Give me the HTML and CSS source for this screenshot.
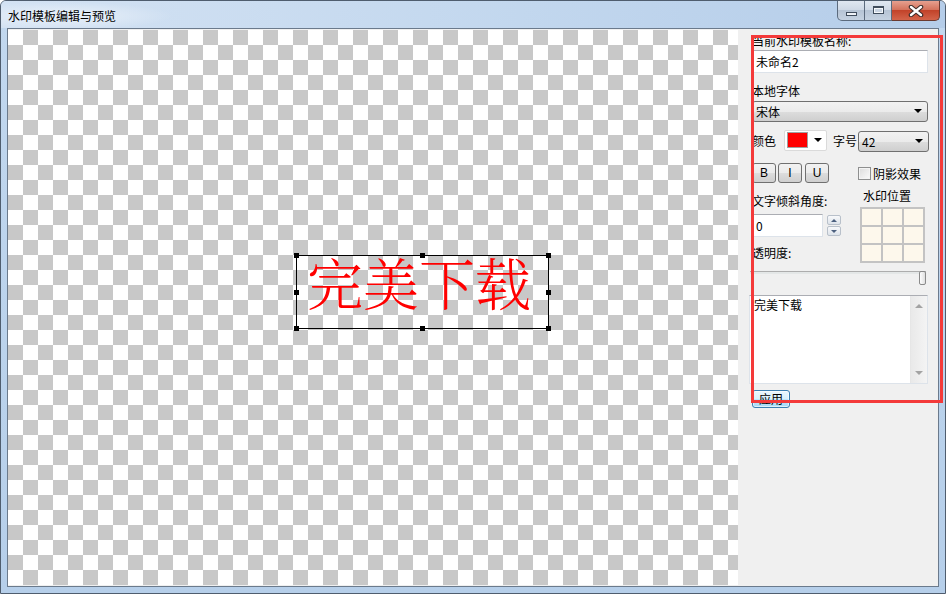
FILE: index.html
```html
<!DOCTYPE html>
<html>
  <head>
    <meta charset="utf-8">
    <link rel="stylesheet" href="styles.css">
  </head>
  <body>
    <div class="window">
      <div class="titlebar">
        <span class="title">水印模板编辑与预览</span>
        <div class="caption-buttons">
          <span class="cap cap-min"><i></i></span>
          <span class="cap cap-max"><i></i></span>
          <span class="cap cap-close">
            <svg width="16" height="12" viewBox="0 0 16 12">
              <path d="M3 2 L13 10 M13 2 L3 10" stroke="#3a2a28" stroke-width="4.5" stroke-linecap="round"/>
              <path d="M3 2 L13 10 M13 2 L3 10" stroke="#fff" stroke-width="2.4" stroke-linecap="round"/>
            </svg>
          </span>
        </div>
      </div>

      <div class="client">
        <div class="canvas">
          <div class="mark">
            <span class="mark-text">完美下载</span>
            <i class="handle h-tl"></i>
            <i class="handle h-tm"></i>
            <i class="handle h-tr"></i>
            <i class="handle h-ml"></i>
            <i class="handle h-mr"></i>
            <i class="handle h-bl"></i>
            <i class="handle h-bm"></i>
            <i class="handle h-br"></i>
          </div>
        </div>

        <div class="panel">
          <div class="label">当前水印模板名称:</div>
          <div class="textbox name">未命名2</div>

          <div class="label label-font">本地字体</div>
          <div class="select font-select">宋体<i class="arrow"></i></div>

          <div class="row color-row">
            <span>颜色</span>
            <span class="color-btn"><i class="swatch"></i><i class="arrow"></i></span>
            <span class="size-label">字号</span>
            <span class="select size-select">42<i class="arrow"></i></span>
          </div>

          <div class="row style-row">
            <span class="btn btn-b">B</span>
            <span class="btn btn-i">I</span>
            <span class="btn">U</span>
            <span class="check"><i class="box"></i>阴影效果</span>
          </div>

          <div class="split">
            <div class="col-left">
              <div class="label">文字倾斜角度:</div>
              <div class="spin">
                <div class="textbox angle">0</div>
                <div class="spin-btns">
                  <span class="up"></span>
                  <span class="down"></span>
                </div>
              </div>
              <div class="label label-alpha">透明度:</div>
            </div>
            <div class="col-right">
              <div class="label label-pos">水印位置</div>
              <div class="pos-grid">
                <i></i><i></i><i></i>
                <i></i><i></i><i></i>
                <i></i><i></i><i></i>
              </div>
            </div>
          </div>

          <div class="slider">
            <div class="track"></div>
            <div class="thumb"></div>
          </div>

          <div class="memo">
            <div class="memo-text">完美下载</div>
            <div class="scrollbar">
              <i class="sb-up"></i>
              <i class="sb-down"></i>
            </div>
          </div>

          <div class="apply">应用</div>
        </div>
      </div>

      <div class="outline"></div>
    </div>
  </body>
</html>
```

FILE: styles.css
```css
* { box-sizing: border-box; }

body {
  margin: 0;
  font-family: "Noto Sans CJK SC", "Noto Sans", sans-serif;
  font-size: 12px;
  color: #000;
}

.window {
  position: relative;
  width: 946px;
  height: 594px;
  border: 1px solid #4f5d6e;
  border-radius: 6px 6px 0 0;
  background: linear-gradient(#c2d8ef, #b6cfea);
  padding: 0 6px 6px;
  display: flex;
  flex-direction: column;
}

/* title bar */
.titlebar {
  height: 27px;
  margin: 0 -6px;
  padding-left: 7px;
  display: flex;
  align-items: flex-start;
  justify-content: space-between;
  border-radius: 5px 5px 0 0;
  background:
    radial-gradient(ellipse 110px 14px at 62px 15px, rgba(255,255,255,.55), rgba(255,255,255,0)),
    linear-gradient(90deg, #d3e2f3, #c2d7ee 55%, #b5cde9);
}
.title { line-height: 14px; margin-top: 8px; }

.caption-buttons { display: flex; margin-right: 5px; }
.cap {
  height: 20px;
  display: flex;
  align-items: center;
  justify-content: center;
  border: 1px solid #5b6a7d;
  border-top: none;
  background: linear-gradient(#dfe7f1, #cfd9e6 45%, #b6c4d5 50%, #c5d2e1);
}
.cap-min { width: 28px; border-radius: 0 0 0 5px; }
.cap-max { width: 27px; border-left: none; }
.cap-close {
  width: 48px;
  border-left: none;
  border-color: #6b3a30;
  border-radius: 0 0 5px 0;
  background: linear-gradient(#e6a08f, #d4735d 45%, #c2432a 50%, #d3644a);
}
.cap-min i {
  width: 11px;
  height: 4px;
  margin-top: 6px;
  background: #eef2f7;
  border: 1px solid #3f4c5c;
}
.cap-max i {
  width: 11px;
  height: 8px;
  margin-top: -2px;
  border: 1px solid #3f4c5c;
  border-top-width: 2px;
  background: #c9d4e2;
  box-shadow: inset 0 0 0 1px #f4f7fa;
}

/* client area */
.client {
  flex: 1;
  display: flex;
  border: 1px solid #6b7a8c;
  background: #f0f0f0;
}

.canvas {
  position: relative;
  width: 730px;
  height: 555px;
  margin-top: 1px;
  background: repeating-conic-gradient(#c8c8c8 0 25%, #fff 0 50%) 0 0 / 30px 30px;
}

.mark {
  position: absolute;
  left: 288px;
  top: 225px;
  width: 253px;
  height: 74px;
  border: 1px solid #000;
}
.mark-text {
  display: block;
  padding-left: 10px;
  margin-top: -3px;
  font-family: "Noto Serif CJK SC", "Noto Sans CJK SC", serif;
  font-weight: 300;
  font-size: 56px;
  line-height: 56px;
  color: #f00;
  white-space: nowrap;
}
.handle { position: absolute; width: 5px; height: 5px; background: #000; }
.h-tl { left: -3px; top: -3px; }
.h-tm { left: 123px; top: -3px; }
.h-tr { left: 249px; top: -3px; }
.h-ml { left: -3px; top: 34px; }
.h-mr { left: 249px; top: 34px; }
.h-bl { left: -3px; top: 70px; }
.h-bm { left: 123px; top: 70px; }
.h-br { left: 249px; top: 70px; }

/* side panel */
.panel {
  flex: 1;
  padding: 5px 0 0 14px;
}

.label { height: 14px; line-height: 14px; white-space: nowrap; }
.label-font { margin-top: 11px; }

.textbox {
  height: 23px;
  border: 1px solid #dde3ea;
  border-top-color: #abadb3;
  background: #fff;
  padding-left: 3px;
  line-height: 21px;
}
.name { width: 176px; margin-top: 2px; }

.select {
  position: relative;
  display: block;
  height: 21px;
  border: 1px solid #707070;
  border-radius: 3px;
  background: linear-gradient(#f2f2f2, #ebebeb 50%, #dddddd 51%, #cfcfcf);
  padding-left: 3px;
  line-height: 19px;
}
.font-select { width: 176px; margin-top: 3px; }
.arrow {
  position: absolute;
  right: 5px;
  top: 7px;
  border-left: 4px solid transparent;
  border-right: 4px solid transparent;
  border-top: 4px solid #000;
}

.row { display: flex; align-items: center; }

.color-row { margin-top: 8px; height: 21px; }
.color-btn {
  position: relative;
  width: 43px;
  height: 21px;
  margin-left: 8px;
  background: #fff;
  border: 1px solid #dadada;
  border-radius: 2px;
}
.swatch {
  position: absolute;
  left: 2px;
  top: 1px;
  width: 21px;
  height: 16px;
  background: #f00;
  border: 1px solid #a0a0a0;
}
.color-btn .arrow { right: 4px; top: 7px; }
.size-label { margin-left: 6px; }
.size-select { width: 71px; margin-left: 1px; margin-top: 1px; }

.style-row { margin-top: 12px; height: 20px; }
.btn {
  width: 24px;
  height: 20px;
  border: 1px solid #707070;
  border-radius: 3px;
  background: linear-gradient(#f2f2f2, #ebebeb 50%, #dddddd 51%, #cfcfcf);
  display: flex;
  align-items: center;
  justify-content: center;
  font-family: "Liberation Sans", sans-serif;
  font-size: 12px;
}
.btn-b { margin-right: 2px; }
.btn-i { margin-right: 3px; }
.check { margin-left: 29px; display: flex; align-items: center; gap: 2px; }
.check .box {
  width: 13px;
  height: 13px;
  border: 1px solid #8e8f8f;
  background: linear-gradient(135deg, #dcdcdc, #fbfbfb);
  box-shadow: inset 0 0 0 1px #f4f4f4;
}

.split { display: flex; }
.col-left { width: 108px; padding-top: 11px; }
.spin { display: flex; margin-top: 6px; }
.angle { width: 71px; }
.spin-btns {
  margin-left: 4px;
  margin-top: 1px;
  display: flex;
  flex-direction: column;
  gap: 1px;
}
.spin-btns span {
  width: 14px;
  height: 10px;
  border: 1px solid #b8c0ca;
  border-radius: 2px;
  background: linear-gradient(#f8f9fb, #dde3ea);
  display: flex;
  align-items: center;
  justify-content: center;
}
.spin-btns .up::after {
  content: "";
  border-left: 3px solid transparent;
  border-right: 3px solid transparent;
  border-bottom: 3px solid #4c607f;
}
.spin-btns .down::after {
  content: "";
  border-left: 3px solid transparent;
  border-right: 3px solid transparent;
  border-top: 3px solid #4c607f;
}
.label-alpha { margin-top: 9px; }

.col-right { padding-top: 6px; }
.label-pos { padding-left: 3px; }
.pos-grid {
  margin-top: 4px;
  display: grid;
  grid-template-columns: repeat(3, 19px);
  grid-template-rows: repeat(3, 16px);
  gap: 2px;
  padding: 2px;
  width: fit-content;
  background: #c3c3c3;
}
.pos-grid i { background: #fdf8ec; }

.slider {
  position: relative;
  width: 176px;
  height: 14px;
  margin: 8px 0 0 -2px;
}
.track {
  margin-top: 5px;
  height: 3px;
  border-top: 1px solid #adadad;
  background: #e4e7e7;
}
.thumb {
  position: absolute;
  left: 169px;
  top: 0;
  width: 7px;
  height: 14px;
  border: 1px solid #8a8a8a;
  border-radius: 2px;
  background: linear-gradient(90deg, #fdfdfd, #e0e0e0);
}

.memo {
  display: flex;
  width: 179px;
  height: 89px;
  margin: 10px 0 0 -3px;
  border: 1px solid #dde3ea;
  border-top-color: #abadb3;
  background: #fff;
}
.memo-text { flex: 1; padding: 2px 0 0 4px; line-height: 14px; }
.scrollbar {
  width: 17px;
  border-left: 1px solid #e6e6e6;
  background: linear-gradient(90deg, #e9e9e9, #f4f4f4);
  display: flex;
  flex-direction: column;
  justify-content: space-between;
  align-items: center;
  padding: 8px 0;
}
.sb-up {
  border-left: 4px solid transparent;
  border-right: 4px solid transparent;
  border-bottom: 4px solid #a3a3a3;
}
.sb-down {
  border-left: 4px solid transparent;
  border-right: 4px solid transparent;
  border-top: 4px solid #a3a3a3;
}

.apply {
  width: 38px;
  height: 18px;
  margin-top: 6px;
  border: 1px solid #3c7fb1;
  border-radius: 3px;
  background: linear-gradient(#eaf6fd, #d9f0fc 50%, #bee6fd 51%, #a7d9f5);
  box-shadow: inset 0 0 0 1px rgba(255,255,255,.6);
  text-align: center;
  line-height: 16px;
}

/* red annotation frame over the panel */
.outline {
  position: absolute;
  left: 750px;
  top: 34px;
  width: 192px;
  height: 368px;
  border: 3px solid #f43a3a;
}
```
